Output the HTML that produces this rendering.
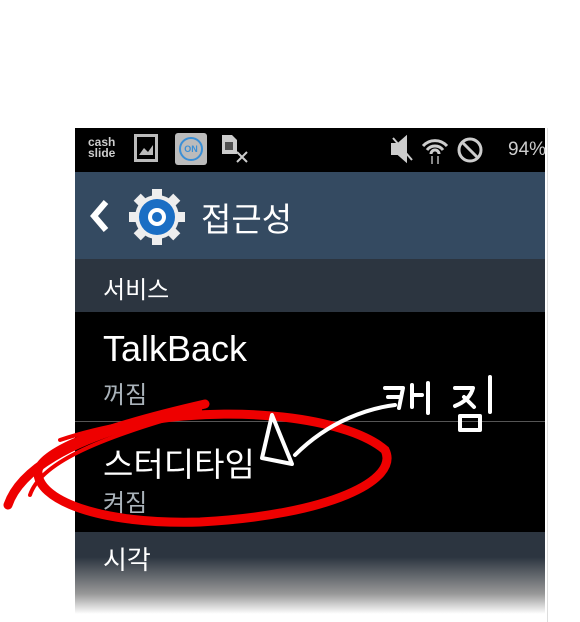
<!DOCTYPE html>
<html><head><meta charset="utf-8"><style>
body{margin:0;width:580px;height:622px;background:#fff;position:relative;overflow:hidden;font-family:"Liberation Sans","Noto Sans CJK KR",sans-serif}
.s{position:absolute;left:75px;width:470px}
.t{position:absolute;color:#fff;white-space:nowrap}
</style></head><body>
<div class="s" style="top:128px;height:44px;background:#000"></div>
<div class="t" style="left:88px;top:137px;font-size:12px;line-height:11px;font-weight:bold;color:#ccc">cash<br>slide</div>
<div style="position:absolute;left:134px;top:134px;width:24px;height:28px;border:3px solid #bbb;box-sizing:border-box"></div>
<svg style="position:absolute;left:138px;top:142px" width="17" height="14"><path d="M1 13 L6 6 L10 10 L15 3 L15 13Z" fill="#bbb"/></svg>
<div style="position:absolute;left:175px;top:133px;width:32px;height:32px;background:#bbb;border-radius:3px"></div>
<div style="position:absolute;left:179px;top:137px;width:20px;height:20px;border:2px solid #3a8fd6;border-radius:50%;font-size:9px;font-weight:bold;color:#3a8fd6;text-align:center;line-height:20px">ON</div>
<svg style="position:absolute;left:220px;top:134px" width="30" height="30"><path d="M2 1 H12 L17 6 V20 H2Z" fill="#ccc"/><path d="M5 8h8v8H5z" fill="#000" opacity=".6"/><path d="M17 18 L27 28 M27 18 L17 28" stroke="#ccc" stroke-width="2"/></svg>
<svg style="position:absolute;left:390px;top:134px" width="100" height="32"><path d="M2 10h6l8-7v24l-8-7H2z M3 4 L22 26" stroke="#ccc" stroke-width="2" fill="#ccc"/><path d="M33 12a16 16 0 0 1 24 0 M37 16a10 10 0 0 1 16 0 M41 20a4 4 0 0 1 8 0" stroke="#ccc" stroke-width="3" fill="none"/><path d="M42 22v8 M48 22v8" stroke="#888" stroke-width="2"/><circle cx="80" cy="16" r="11" stroke="#ccc" stroke-width="3" fill="none"/><path d="M72 8l16 16" stroke="#ccc" stroke-width="3"/></svg>
<div class="t" style="left:508px;top:139px;font-size:19px;color:#ccc">94%</div>
<div class="s" style="top:172px;height:87px;background:#344a61"></div>
<svg style="position:absolute;left:88px;top:198px" width="24" height="36"><path d="M18 4 L6 18 L18 32" stroke="#fff" stroke-width="6" fill="none"/></svg>
<svg style="position:absolute;left:128px;top:188px" width="58" height="58" viewBox="-29 -29 58 58"><g fill="#eee"><circle r="22"/><g id="g"><rect x="-5" y="-28" width="10" height="10"/></g><use href="#g" transform="rotate(45)"/><use href="#g" transform="rotate(90)"/><use href="#g" transform="rotate(135)"/><use href="#g" transform="rotate(180)"/><use href="#g" transform="rotate(225)"/><use href="#g" transform="rotate(270)"/><use href="#g" transform="rotate(315)"/></g><circle r="18" fill="#1a6ec4"/><circle r="9" fill="#fff"/><circle r="5" fill="#1a6ec4"/></svg>
<div class="t" style="left:201px;top:193px;font-size:33px">접근성</div>
<div class="s" style="top:259px;height:53px;background:#2c3540"></div>
<div class="t" style="left:103px;top:270px;font-size:24px">서비스</div>
<div class="s" style="top:312px;height:220px;background:#000"></div>
<div class="t" style="left:103px;top:328px;font-size:36px">TalkBack</div>
<div class="t" style="left:103px;top:375px;font-size:24px;color:#aab3ba">꺼짐</div>
<div class="s" style="top:421px;height:1px;background:#555"></div>
<div class="t" style="left:103px;top:438px;font-size:33px">스터디타임</div>
<div class="t" style="left:103px;top:483px;font-size:24px;color:#aab3ba">켜짐</div>
<div class="s" style="top:532px;height:90px;background:linear-gradient(#2c3540 0,#2c3540 25px,#999 62px,#fff 82px)"></div>
<div class="t" style="left:103px;top:540px;font-size:26px">시각</div>
<div style="position:absolute;left:547px;top:128px;width:1px;height:494px;background:#ddd"></div>
<svg style="position:absolute;left:0;top:0" width="580" height="622"><g fill="none" stroke="#e00" stroke-linecap="round"><path d="M8 505 C20 470 70 440 150 420 C250 405 350 420 385 450 C400 480 330 515 200 522 C100 525 35 500 38 470 C45 450 100 428 205 404" stroke-width="9"/><path d="M60 440 C150 410 280 405 350 430" stroke-width="4"/><path d="M30 495 C40 465 90 440 200 410" stroke-width="4"/></g><g fill="none" stroke="#fff" stroke-width="4" stroke-linecap="round" stroke-linejoin="round"><path d="M295 455 C330 420 370 408 395 405"/><path d="M272 415 L262 458 L292 464Z"/><path d="M385 388 h18 l-4 20 M388 397h12 M412 385v22 M412 395h10 M428 383v30 M455 388 h18 c-2 8 -8 14 -18 18 M464 397 l10 10 M490 377v35 M460 416h20v14h-20z"/></g></svg>
</body></html>
